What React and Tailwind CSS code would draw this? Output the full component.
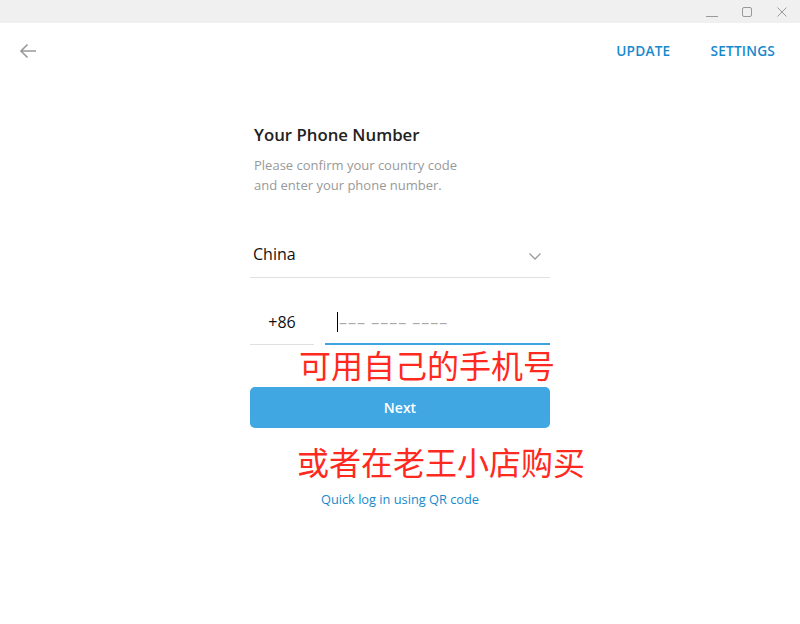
import React from "react";

export default function App() {
  const font = { fontFamily: '"Open Sans", "Noto Sans", sans-serif' };
  return (
    <div className="w-[800px] h-[624px] bg-white relative overflow-hidden" style={font}>
      {/* title bar */}
      <div className="h-[23px] bg-[#f0f0f0] flex justify-end items-center">
        <div className="w-[35px] h-[23px] flex items-center justify-center">
          <svg width="14" height="12" viewBox="0 0 14 12"><path d="M1 10.5h12" stroke="#9a9a9a" strokeWidth="1" /></svg>
        </div>
        <div className="w-[35px] h-[23px] flex items-center justify-center">
          <svg width="12" height="12" viewBox="0 0 12 12"><rect x="1.5" y="1.5" width="9" height="9" rx="1.5" fill="none" stroke="#9a9a9a" strokeWidth="1" /></svg>
        </div>
        <div className="w-[36px] h-[23px] flex items-center justify-center">
          <svg width="12" height="12" viewBox="0 0 12 12"><path d="M1.5 1.5l9 9M10.5 1.5l-9 9" stroke="#9a9a9a" strokeWidth="1" /></svg>
        </div>
      </div>

      {/* header */}
      <div className="h-[56px] flex items-center justify-between pl-[18px] pr-[25px]">
        <svg width="20" height="20" viewBox="0 0 20 20">
          <path d="M18 10H3M9.5 3.5L3 10l6.5 6.5" fill="none" stroke="#999" strokeWidth="1.6" />
        </svg>
        <div className="flex gap-[40px] text-[13.7px] font-semibold text-[#168acd] tracking-[0.2px]">
          <span>UPDATE</span>
          <span>SETTINGS</span>
        </div>
      </div>

      {/* form */}
      <div className="w-[300px] mx-auto pt-[45px]">
        <div className="pl-[4px] text-[16.8px] font-semibold text-[#222] leading-[22px]">Your Phone Number</div>
        <div className="pl-[4px] mt-[9px] text-[13px] text-[#999] leading-[20px]">
          Please confirm your country code
          <br />
          and enter your phone number.
        </div>

        <div className="mt-[37px] h-[46px] border-b border-[#e0e0e0] flex items-center justify-between pl-[3px] pr-[8px] pb-[2px]">
          <span className="text-[16px] text-[#111]">China</span>
          <svg width="14" height="10" viewBox="0 0 14 10" className="mt-[4px]">
            <path d="M1.5 2.5L7 8l5.5-5.5" fill="none" stroke="#999" strokeWidth="1.3" />
          </svg>
        </div>

        <div className="mt-[22px] flex items-end gap-[11px]">
          <div className="w-[64px] h-[45px] border-b border-[#e0e0e0] flex items-center justify-center text-[16px] text-[#111]">+86</div>
          <div className="flex-1 h-[45px] border-b-2 border-[#3ba3de] flex items-center pl-[12px]">
            <span className="w-px h-[20px] bg-black"></span>
            <span className="text-[16px] text-[#aaa] ml-[1px] tracking-[1px]">––– –––– ––––</span>
          </div>
        </div>

        <button className="mt-[42px] w-[300px] h-[41px] rounded-[5px] bg-[#40a7e3] text-white text-[14px] font-semibold flex items-center justify-center">
          Next
        </button>

        <div className="mt-[62px] text-center text-[12.8px] text-[#168acd]">Quick log in using QR code</div>
      </div>

      {/* red annotations */}
      <div
        className="absolute left-[299px] top-[344px] text-[32px] leading-[40px] text-[#ff2a1f] whitespace-nowrap"
        style={{ fontFamily: '"Noto Sans CJK SC", sans-serif' }}
      >
        可用自己的手机号
      </div>
      <div
        className="absolute left-[297px] top-[441px] text-[32px] leading-[40px] text-[#ff2a1f] whitespace-nowrap"
        style={{ fontFamily: '"Noto Sans CJK SC", sans-serif' }}
      >
        或者在老王小店购买
      </div>
    </div>
  );
}
